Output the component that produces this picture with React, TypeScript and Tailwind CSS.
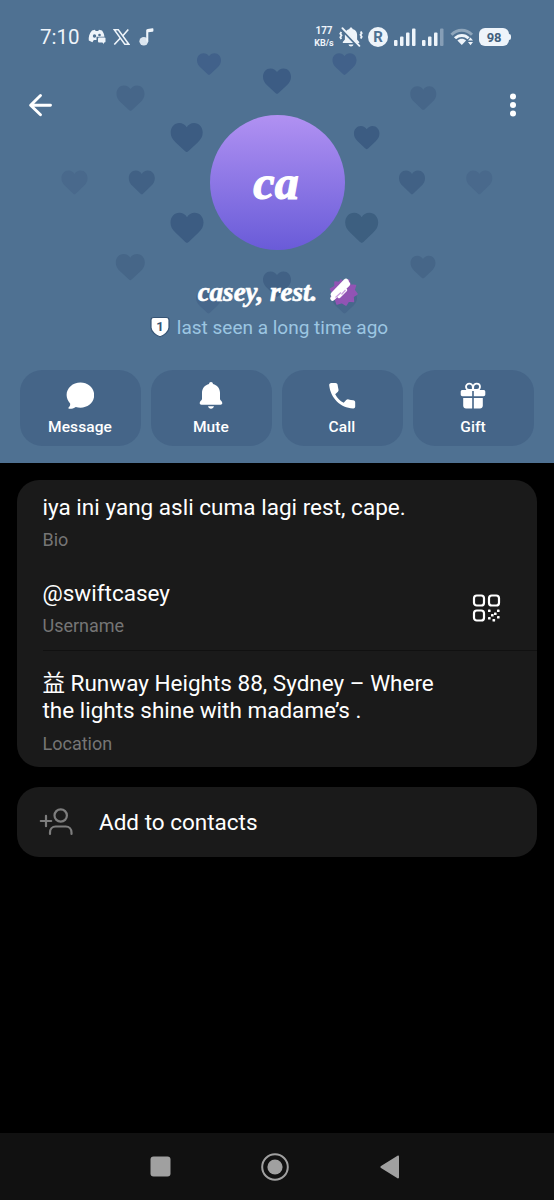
import type { ReactNode } from "react";

interface Heart {
  x: number;
  y: number;
  w: number;
  color: string;
}

const hearts: Heart[] = [
  { x: 209, y: 64, w: 24, color: "#41618a" },
  { x: 344.5, y: 64, w: 24, color: "#41618a" },
  { x: 277, y: 81, w: 28, color: "#3c5c84" },
  { x: 130.5, y: 98, w: 28, color: "#466689" },
  { x: 423.3, y: 98, w: 26, color: "#466689" },
  { x: 186.7, y: 137.5, w: 32, color: "#3c5c82" },
  { x: 366.7, y: 137.5, w: 25.5, color: "#3c5c82" },
  { x: 74.5, y: 182.3, w: 26, color: "#49698c" },
  { x: 141.8, y: 182.3, w: 26, color: "#416185" },
  { x: 412, y: 182.3, w: 26, color: "#416185" },
  { x: 479.3, y: 182.3, w: 26, color: "#49698c" },
  { x: 187, y: 227.7, w: 33, color: "#3c5c82" },
  { x: 361.7, y: 227.7, w: 33, color: "#3d5f80" },
  { x: 130.3, y: 267, w: 29, color: "#466688" },
  { x: 423, y: 267, w: 25, color: "#466688" },
  { x: 277, y: 284, w: 28, color: "#416185" },
  { x: 208.5, y: 302, w: 25, color: "#47678b" },
  { x: 344.5, y: 302, w: 25, color: "#47678b" },
];

const HeartPattern = () => (
  <svg className="absolute left-0 top-0" width="554" height="463" viewBox="0 0 554 463">
    {hearts.map((h) => (
      <path
        key={`${h.x}-${h.y}`}
        transform={`translate(${h.x - h.w / 2} ${h.y - h.w * 0.45}) scale(${h.w / 32})`}
        fill={h.color}
        d="M16 29C15.2 29 14.6 28.4 13.6 27.5L5 19.4C1.6 16.2 0 13.2 0 9.4 0 4 3.8 0 8.6 0 11.8 0 14.5 1.6 16 4.2 17.5 1.6 20.2 0 23.4 0 28.2 0 32 4 32 9.4 32 13.2 30.4 16.2 27 19.4L18.4 27.5C17.4 28.4 16.8 29 16 29Z"
      />
    ))}
  </svg>
);

const Signal = ({ weak = false }: { weak?: boolean }) => (
  <svg width="22" height="18" viewBox="0 0 22 18" fill="#eef4fa">
    <rect x="0" y="12" width="3.5" height="6" rx="1" />
    <rect x="6" y="8.5" width="3.5" height="9.5" rx="1" />
    <rect x="12" y="4.5" width="3.5" height="13.5" rx="1" />
    <rect x="18" y="0.5" width="3.5" height="17.5" rx="1" opacity={weak ? 0.35 : 1} />
  </svg>
);

const StatusBar = () => (
  <div className="relative flex h-[74px] items-center pl-[40px] pr-[43px] text-[#eef4fa]">
    <span className="w-[40px] whitespace-nowrap text-[20.5px] leading-none">7:10</span>
    <svg className="ml-[8px]" width="18" height="16" viewBox="0 0 18 16">
      <path
        fill="#eef4fa"
        d="M4 1.5 7 .8 7.6 2h2.600l.8-1.200 3 .8c1.400 2 2.300 4 2.400 6.200H8.500v3.200H5.800L4.400 13.200.8 11.600C.3 8.200 1.400 4.400 4 1.500Z"
      />
      <circle cx="6.500" cy="7" r="1.700" fill="#4f7192" />
      <circle cx="11.500" cy="6" r="1.300" fill="#4f7192" />
      <rect x="10" y="8.500" width="7.500" height="5" rx="1" fill="#eef4fa" />
      <path fill="#eef4fa" d="m13.500 12 2.500 3.200V12Z" />
    </svg>
    <svg className="ml-[7px]" width="17" height="16" viewBox="0 0 17 16" fill="none" stroke="#eef4fa">
      <path strokeWidth="1.500" d="M1.300.8h4L15.800 15.200h-4Z" />
      <path strokeWidth="1.600" d="M15.300.5 9.600 7M7.400 9 1.300 15.500" />
    </svg>
    <svg className="ml-[9px]" width="16" height="18" viewBox="0 0 16 18">
      <ellipse cx="4.800" cy="13.300" rx="4.400" ry="4.200" fill="#dbe5ef" />
      <path d="M7.200 13.500V2.500C7.200 1.500 7.700 1 8.700.9L13.500.3c.6-.1.900.2.900.8v1.700c0 .6-.3.900-.9 1L9.300 4.300v9.200Z" fill="#eef4fa" />
    </svg>

    <div className="ml-auto flex items-center">
      <div className="flex w-[20px] flex-col items-center whitespace-nowrap text-[9px] font-bold leading-[12px]">
        <span className="text-[10px]">177</span>
        <span>KB/s</span>
      </div>
      <svg className="ml-[5px]" width="24" height="22" viewBox="0 0 24 22">
        <path
          fill="#eef4fa"
          d="M12 1.500c.9 0 1.500.6 1.500 1.400 2.900.7 4.600 2.900 4.600 5.900v4.700l2.100 2.600v1H3.800v-1l2.100-2.600V8.800c0-3 1.700-5.200 4.600-5.900 0-.8.6-1.400 1.500-1.400ZM9.500 18.500h5c-.3 1.200-1.200 2-2.500 2s-2.200-.8-2.500-2Z"
        />
        <path d="M3.800 4.200 20 21" stroke="#4f7192" strokeWidth="3" />
        <path d="M3.400 2.200 20.400 19.800" stroke="#eef4fa" strokeWidth="1.900" strokeLinecap="round" />
        <path
          d="m2.300 6-1 1.800 1.200 1.600-1.200 1.800 1 1.800M21.700 5.500l1 1.800-1.200 1.600 1.200 1.800-1 1.800"
          fill="none"
          stroke="#eef4fa"
          strokeWidth="1.800"
        />
      </svg>
      <span className="ml-[5px] flex size-[20px] items-center justify-center rounded-full bg-[#eef4fa] text-[15px] font-bold leading-none text-[#4f7192]">
        R
      </span>
      <span className="ml-[6px]">
        <Signal />
      </span>
      <span className="ml-[6px]">
        <Signal weak />
      </span>
      <svg className="ml-[6px]" width="25" height="18" viewBox="0 0 25 18" fill="none" stroke="#eef4fa">
        <path opacity=".4" strokeWidth="3" d="M1.500 6.800C7.500.8 16 .8 22 6.800" />
        <path strokeWidth="3" d="M5 10.300c4-3.900 9.800-3.900 13.600 0" />
        <path stroke="none" fill="#eef4fa" d="M7.400 12.500c2.500-2.300 6.300-2.300 8.700 0l-4.300 4.600ZM18 12.600l2.500-3.200 2.500 3.200ZM18 14l2.500 3.200L23 14Z" />
      </svg>
      <span className="ml-[4px] flex h-[18px] w-[30px] items-center justify-center rounded-[6px] bg-[#eef4fa] text-[13px] font-bold leading-none tracking-[-0.3px] text-[#42607d]">
        98
      </span>
      <span className="h-[6px] w-[2px] rounded-r bg-[#eef4fa]" />
    </div>
  </div>
);

const NameBadge = () => (
  <svg width="30" height="30" viewBox="0 0 30 30">
    <path
      fill="#9254b4"
      stroke="#9254b4"
      strokeWidth="1.500"
      strokeLinejoin="round"
      d="m13 3 3 3 5-3 1 5 5.500.5-1.500 4.500 3 4-4 2.500.5 5-5-.5-2.500 4-4-2.500-5 1.500-1.500-4.500-4.500-2 2-4.500-2.500-4 4.500-2.500 0-4.500 4.500.5Z"
    />
    <g stroke="#fff" strokeLinecap="round" fill="none">
      <path d="M5.500 17.500 18 4.500" strokeWidth="5.500" />
      <path d="M4.500 21.500 20 7" strokeWidth="4.500" />
      <path d="M11 19.500 17.500 13" strokeWidth="3.500" />
    </g>
    <path d="M7.500 20.500 13 15.500M13.500 17.500l4-4.500" stroke="#c89ddd" strokeWidth="1.200" />
  </svg>
);

const Header = () => (
  <div className="relative h-[463px] bg-[#4f7192]">
    <HeartPattern />
    <StatusBar />
    <div className="relative grid h-[296px] grid-cols-[53px_1fr_53px]">
      <svg className="ml-[28px] mt-[19px]" width="25" height="24" viewBox="0 0 25 24" fill="none" stroke="#fff" strokeWidth="2.900" strokeLinecap="round" strokeLinejoin="round">
        <path d="M22.500 12.300H3M12.500 2.500 2.600 12.300l9.900 9.500" />
      </svg>
      <div className="flex flex-col items-center pt-[41px]">
        <div className="flex size-[135px] items-center justify-center rounded-full bg-linear-to-b from-[#b191f2] to-[#6a5bd8] font-['Liberation_Serif'] text-[48px] font-bold italic leading-none text-white [-webkit-text-stroke:1.2px_white]">
          <span className="-ml-[2px]">ca</span>
        </div>
        <div className="ml-[2px] mt-[27px] flex h-[30px] items-center gap-[11px] text-white">
          <span className="whitespace-nowrap font-['Liberation_Serif'] text-[27px] font-bold italic leading-none [-webkit-text-stroke:0.6px_white]">
            casey, rest.
          </span>
          <NameBadge />
        </div>
        <div className="mr-[16px] mt-[8px] flex h-[24px] items-center gap-[7px]">
          <svg width="20" height="22" viewBox="0 0 20 22">
            <path
              fill="#fff"
              stroke="#365475"
              strokeWidth="1.200"
              d="M3.500 1.500h13c1.500 0 2.500 1 2.500 2.500v7.500c0 4.500-5.500 8-9 9.200C6.500 19.500 1 16 1 11.500V4c0-1.500 1-2.500 2.500-2.500Z"
            />
            <text x="10" y="15" textAnchor="middle" fontFamily="Roboto, sans-serif" fontSize="13" fontWeight="700" fill="#365475">
              1
            </text>
          </svg>
          <span className="whitespace-nowrap text-[19px] leading-none text-[#9cc6e2]">last seen a long time ago</span>
        </div>
      </div>
      <svg className="ml-[8px] mt-[19px]" width="8" height="24" viewBox="0 0 8 24" fill="#fff">
        <circle cx="4" cy="3.500" r="3" />
        <circle cx="4" cy="12" r="3" />
        <circle cx="4" cy="20.500" r="3" />
      </svg>
    </div>
    <div className="relative grid grid-cols-4 gap-[10px] px-[20px]">
      <ActionButton label="Message">
        <path d="M14.500 1.500c7.700 0 13.700 5.500 13.700 12.600 0 7-6 12.600-13.700 12.600-1.700 0-3.200-.3-4.700-.8-1.800 1.400-4.200 2-6.700 1.900-.8 0-1-.8-.5-1.300 1.200-1.200 1.800-2.700 1.500-4.100C2 20.200.6 17.300.6 14.100.6 7 6.700 1.500 14.500 1.500Z" />
      </ActionButton>
      <ActionButton label="Mute">
        <path d="M14 1c1.200 0 1.900.8 2 2 4 .9 7 4.400 7 8.800v6.300c0 1.300 2.300 2.300 2.300 4 0 1-.7 1.600-1.700 1.600H4.400c-1 0-1.700-.6-1.700-1.600 0-1.700 2.300-2.700 2.300-4v-6.300C5 7.400 8 3.900 12 3c.1-1.200.8-2 2-2ZM11 25.200h6c-.4 1.600-1.500 2.500-3 2.500s-2.600-.9-3-2.500Z" />
      </ActionButton>
      <ActionButton label="Call">
        <path d="M3.200 2h4.300c1.200 0 1.900.7 2.100 1.800.3 1.800.5 3.300.9 4.700.2.900 0 1.700-.6 2.300l-2.700 2.400c2.200 4 4.600 6.500 8.500 8.500l2.500-2.600c.6-.6 1.400-.9 2.300-.7 1.600.4 3.100.6 4.800.8 1.200.2 1.900.9 1.900 2.100v4.300c0 1.200-.9 2-2.100 1.900C12.500 26.800 2.500 17 1.200 4.200 1.100 3 2 2 3.200 2Z" />
      </ActionButton>
      <ActionButton label="Gift">
        <path d="M3.500 9h9.700v6.300H3.500c-1 0-1.800-.7-1.800-1.700v-2.900C1.700 9.700 2.500 9 3.500 9ZM14.800 9h9.700c1 0 1.800.7 1.800 1.700v2.900c0 1-.8 1.700-1.800 1.700h-9.700ZM4.200 17h9v10.500H7c-1.600 0-2.800-1.100-2.800-2.700ZM14.800 17h9v7.800c0 1.600-1.200 2.700-2.800 2.700h-6.200Z" />
        <path d="M13.800 9V6.200C13.800 4.200 12.200 2.700 10.300 2.700S7 4.100 7 5.800 8.300 9 10 9ZM14.200 9V6.200c0-2 1.600-3.500 3.500-3.500S21 4.100 21 5.800 19.700 9 18 9Z" fill="none" stroke="#fff" strokeWidth="1.800" />
      </ActionButton>
    </div>
  </div>
);

const ActionButton = ({ label, children }: { label: string; children: ReactNode }) => (
  <button className="flex h-[76px] flex-col items-center rounded-[22px] bg-[#456588] pt-[11px] text-white">
    <svg className="mr-[2px]" width="28" height="29" viewBox="0 0 28 29" fill="#fff">
      {children}
    </svg>
    <span className="mr-px mt-[7px] text-[15.500px] font-medium leading-[20px] tracking-[0.1px]">{label}</span>
  </button>
);

const Caption = ({ children }: { children: ReactNode }) => (
  <div className="text-[18px] leading-[22px] text-[#757575]">{children}</div>
);

const InfoCard = () => (
  <div className="mx-[17px] mt-[17px] h-[287px] rounded-[22px] bg-[#1a1a1a] pl-[25.500px] text-[22.500px] leading-[27px] text-white">
    <div className="h-[85px] pt-[14px]">
      <div className="tracking-[0.02px]">iya ini yang asli cuma lagi rest, cape.</div>
      <div className="mt-[8px]">
        <Caption>Bio</Caption>
      </div>
    </div>
    <div className="flex h-[86px] items-start justify-between border-b border-[#111] pt-[15px]">
      <div>
        <div>@swiftcasey</div>
        <div className="mt-[8px]">
          <Caption>Username</Caption>
        </div>
      </div>
      <svg className="mr-[36px] mt-[14px]" width="29" height="28" viewBox="0 0 29 28" fill="none" stroke="#fff" strokeWidth="2.200">
        <rect x="2" y="1.500" width="10" height="10" rx="2.800" />
        <rect x="17" y="1.500" width="10" height="10" rx="2.800" />
        <rect x="2" y="16.500" width="10" height="10" rx="2.800" />
        <g stroke="none" fill="#fff">
          <rect x="16" y="15.500" width="2.600" height="2.600" rx=".6" />
          <rect x="25" y="15.500" width="2.600" height="2.600" rx=".6" />
          <rect x="22" y="18.500" width="2.600" height="2.600" rx=".6" />
          <rect x="19" y="20" width="2.600" height="2.600" rx=".6" />
          <rect x="16" y="23" width="2.600" height="2.600" rx=".6" />
          <rect x="20.500" y="25" width="2.600" height="2.600" rx=".6" />
          <rect x="25" y="22" width="2.600" height="2.600" rx=".6" />
        </g>
      </svg>
    </div>
    <div className="pt-[19px]">
      <div>
        益 Runway Heights 88, Sydney – Where
        <br />
        the lights shine with madame’s .
      </div>
      <div className="mt-[9px]">
        <Caption>Location</Caption>
      </div>
    </div>
  </div>
);

const App = () => {
  return (
    <div className="flex h-[1200px] w-[554px] flex-col overflow-hidden bg-black font-['Roboto','Noto_Sans_CJK_SC',sans-serif]">
      <Header />
      <InfoCard />
      <div className="mx-[17px] mt-[20px] flex h-[70px] items-center rounded-[22px] bg-[#1a1a1a] pl-[22px]">
        <svg width="36" height="30" viewBox="0 0 36 30" fill="none" stroke="#7d7d7d" strokeWidth="2.200" strokeLinecap="round">
          <circle cx="21.700" cy="8.500" r="6.200" />
          <path d="M11 27v-1.500c0-3.500 2.200-6 5.700-6h10c3.500 0 5.800 2.500 5.800 6V27M1.800 14h10.400M7 8.800v10.400" />
        </svg>
        <span className="ml-[24px] text-[22.500px] leading-[27px] text-white">Add to contacts</span>
      </div>
      <div className="mt-auto flex h-[67px] bg-[#111] text-[#a0a0a0]">
        <svg className="ml-[150px] mt-[23px]" width="21" height="21" viewBox="0 0 21 21" fill="currentColor">
          <rect x="0.500" y="0.500" width="20" height="20" rx="3" />
        </svg>
        <svg className="ml-[90px] mt-[20px]" width="28" height="28" viewBox="0 0 28 28">
          <circle cx="14" cy="14" r="12.800" fill="none" stroke="currentColor" strokeWidth="2" />
          <circle cx="14" cy="14" r="7.600" fill="currentColor" />
        </svg>
        <svg className="ml-[91px] mt-[22px]" width="20" height="24" viewBox="0 0 20 24" fill="currentColor">
          <path d="M1 11 17.500.8c.8-.5 1.500 0 1.500.9v20.600c0 .9-.7 1.400-1.500.9L1 13c-.8-.6-.8-1.400 0-2Z" />
        </svg>
      </div>
    </div>
  );
};

export default App;
